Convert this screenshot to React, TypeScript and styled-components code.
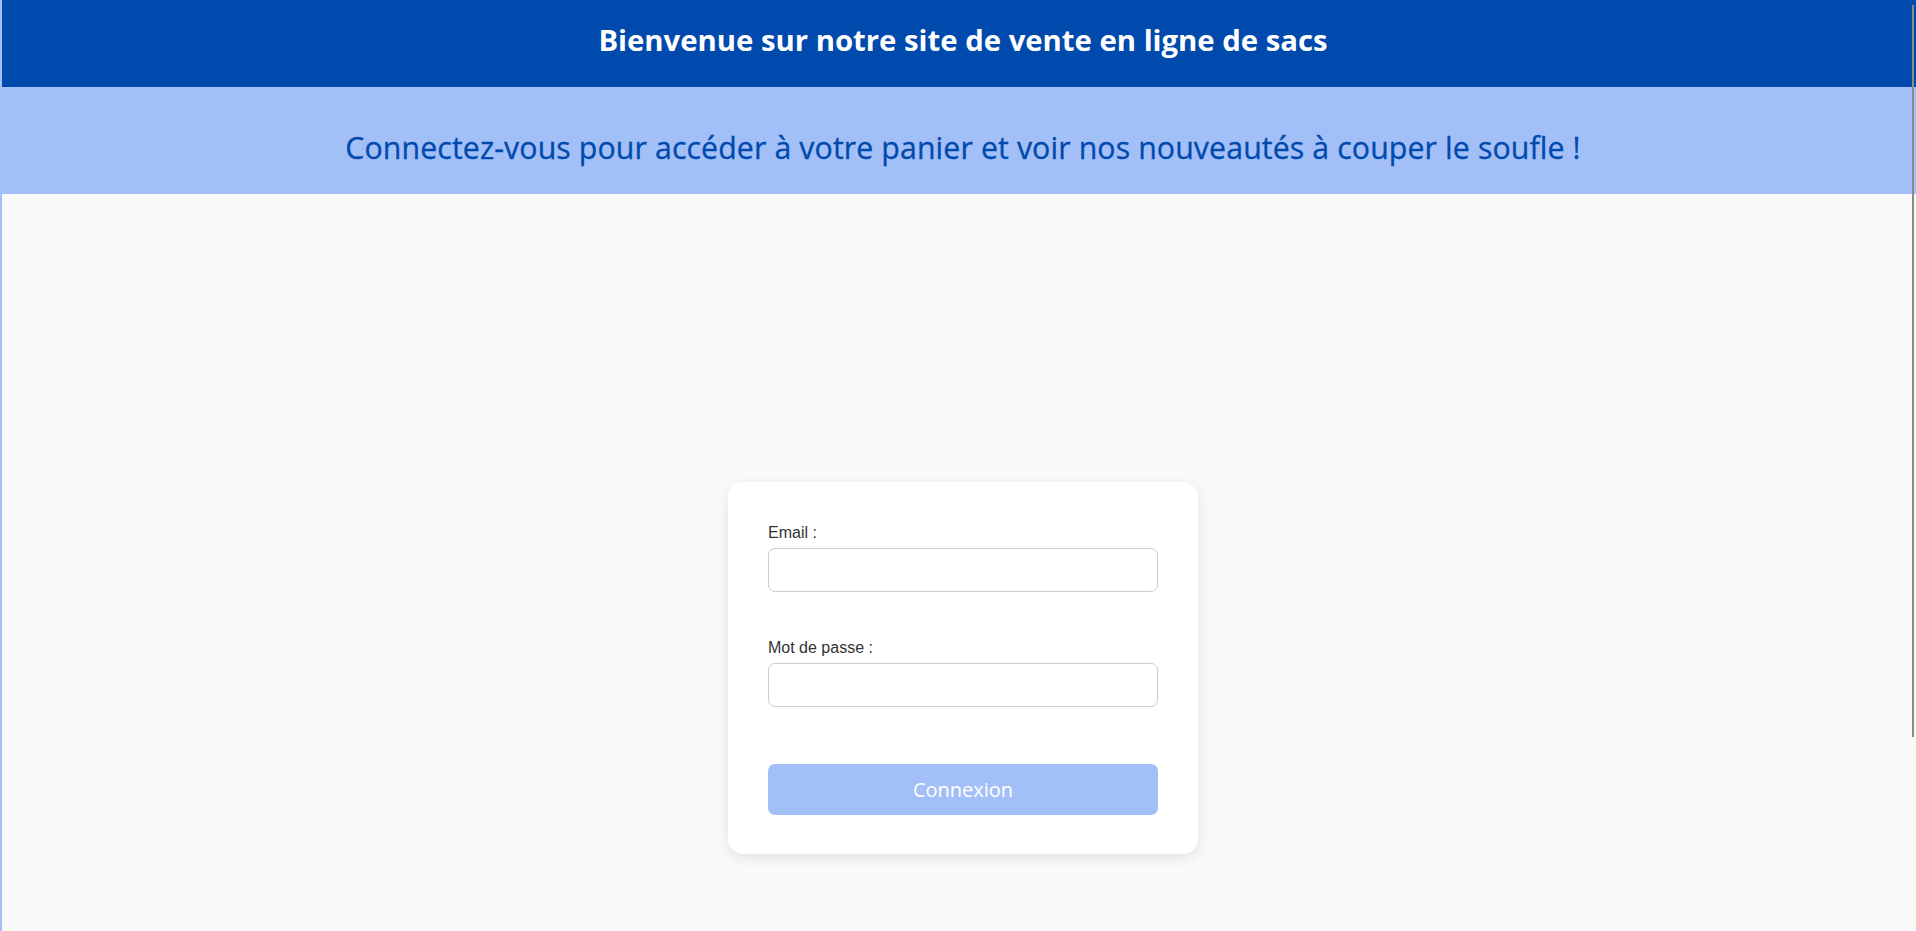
import React from "react";
import styled, { createGlobalStyle } from "styled-components";

const GlobalStyle = createGlobalStyle`
  html, body {
    margin: 0;
    padding: 0;
    background: #f9f9f9;
  }
  * { box-sizing: border-box; }
`;

const Page = styled.div`
  position: relative;
  min-height: 1176px;
  display: flex;
  flex-direction: column;
  background: #f9f9f9;
  border-left: 2px solid #a3bff8;
`;

const TopBar = styled.header`
  height: 87px;
  background: #004aad;
  display: flex;
  align-items: center;
  justify-content: center;
  padding-left: 8px;
`;

const Title = styled.h1`
  margin: 0 0 8px;
  color: #ffffff;
  font-family: "Open Sans", "Noto Sans", sans-serif;
  font-weight: 700;
  font-size: 29.3px;
  letter-spacing: 0;
`;

const Banner = styled.section`
  height: 107px;
  background: #a3bff8;
  display: flex;
  align-items: center;
  justify-content: center;
  padding-left: 8px;
`;

const Subtitle = styled.h2`
  margin: 14px 0 0;
  color: #004aad;
  font-family: "Open Sans", "Noto Sans", sans-serif;
  font-weight: 400;
  font-size: 30.3px;
  letter-spacing: 0.1px;
  -webkit-text-stroke: 0.3px #004aad;
`;

const Main = styled.main`
  flex: 1;
  display: flex;
  justify-content: center;
  align-items: flex-start;
  padding: 288px 0 300px 8px;
`;

const Card = styled.form`
  width: 470px;
  background: #ffffff;
  border-radius: 15px;
  box-shadow: 0 4px 14px rgba(0, 0, 0, 0.09);
  padding: 42px 40px 39px;
  display: flex;
  flex-direction: column;
`;

const Field = styled.div<{ $gap: number }>`
  display: flex;
  flex-direction: column;
  margin-bottom: ${(p) => p.$gap}px;
`;

const Label = styled.label`
  font-family: "Liberation Sans", Arial, sans-serif;
  font-size: 16px;
  line-height: 18px;
  color: #333333;
  margin-bottom: 6px;
`;

const Input = styled.input`
  width: 100%;
  height: 44px;
  border: 1px solid #cccccc;
  border-radius: 7px;
  background: #ffffff;
  font-size: 16px;
  padding: 0 10px;
  outline: none;
`;

const Button = styled.button`
  width: 100%;
  height: 51px;
  border: none;
  border-radius: 7px;
  background: #a3bff8;
  color: #ffffff;
  font-family: "Open Sans", "Noto Sans", sans-serif;
  font-size: 20px;
  letter-spacing: 0;
  cursor: pointer;
`;

const ScrollThumb = styled.div`
  position: absolute;
  top: 5px;
  right: 2px;
  width: 2px;
  height: 732px;
  background: #8a8a8a;
`;

export default function App() {
  return (
    <>
      <GlobalStyle />
      <Page>
        <TopBar>
          <Title>Bienvenue sur notre site de vente en ligne de sacs</Title>
        </TopBar>
        <Banner>
          <Subtitle>
            Connectez-vous pour accéder à votre panier et voir nos nouveautés à couper le soufle !
          </Subtitle>
        </Banner>
        <Main>
          <Card onSubmit={(e) => e.preventDefault()}>
            <Field $gap={47}>
              <Label htmlFor="email">Email :</Label>
              <Input id="email" type="email" />
            </Field>
            <Field $gap={57}>
              <Label htmlFor="password">Mot de passe :</Label>
              <Input id="password" type="password" />
            </Field>
            <Button type="submit">Connexion</Button>
          </Card>
        </Main>
        <ScrollThumb />
      </Page>
    </>
  );
}
